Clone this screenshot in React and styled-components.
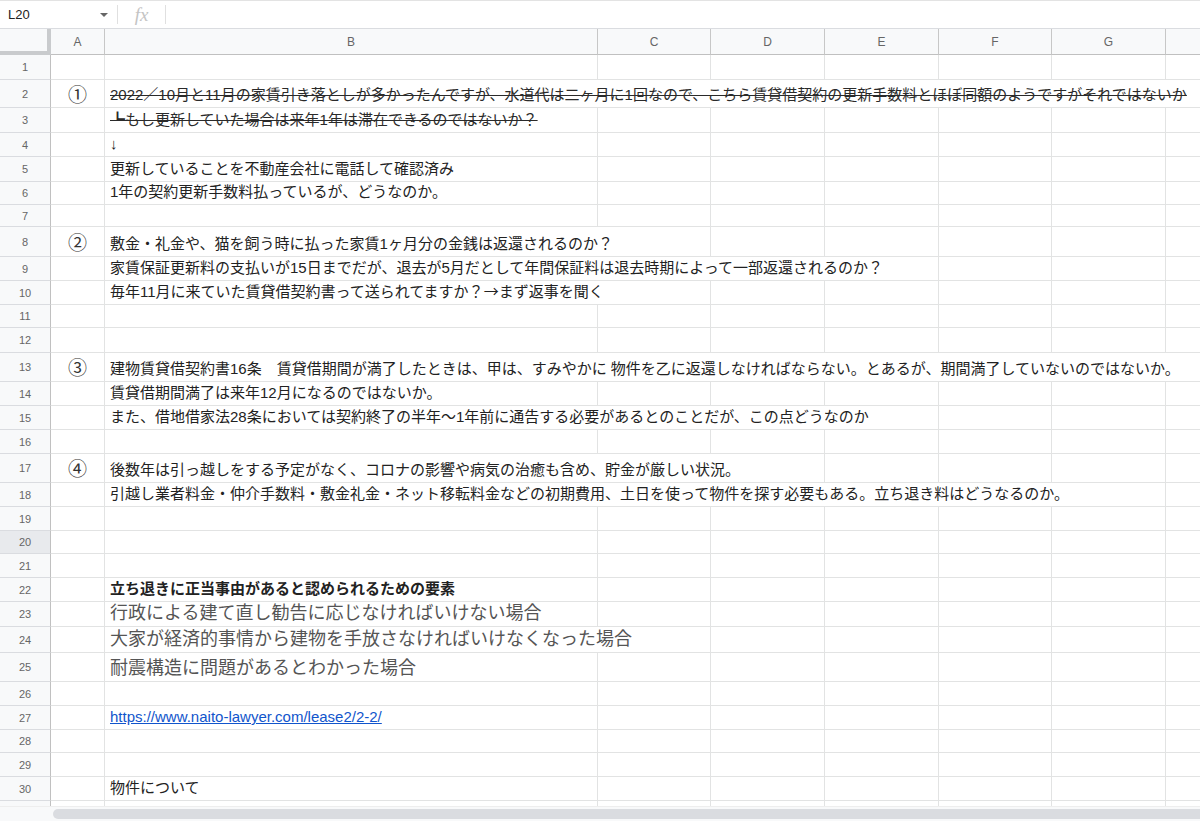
import React from "react";
import styled, { createGlobalStyle } from "styled-components";

const GlobalStyle = createGlobalStyle`
  html, body {
    margin: 0;
    padding: 0;
    background: #fff;
    font-family: "Liberation Sans", "Noto Sans CJK JP", sans-serif;
  }
  * { box-sizing: border-box; }
`;

const COLS = [54, 493, 113, 114, 114, 113, 114, 114];
const LETTERS = ["A", "B", "C", "D", "E", "F", "G", "H"];
const HEIGHTS = [25, 28, 25, 24, 25, 23, 22, 30, 24, 24, 23, 25, 29, 24, 24, 24, 29, 24, 24, 23, 24, 24, 25, 26, 29, 24, 24, 23, 24, 24, 24];

const Jp = styled.span`
  font-family: "Noto Sans CJK JP", sans-serif;
`;

const ROWS = {
  2: { mark: "①", span: 7, kind: "strike", text: "2022／10月と11月の家賃引き落としが多かったんですが、水道代は二ヶ月に1回なので、こちら賃貸借契約の更新手数料とほぼ同額のようですがそれではないか" },
  3: { span: 1, kind: "strike", text: "┗もし更新していた場合は来年1年は滞在できるのではないか？" },
  4: { span: 1, text: "↓" },
  5: { span: 1, text: "更新していることを不動産会社に電話して確認済み" },
  6: { span: 1, text: "1年の契約更新手数料払っているが、どうなのか。" },
  8: { mark: "②", span: 2, text: "敷金・礼金や、猫を飼う時に払った家賃1ヶ月分の金銭は返還されるのか？" },
  9: { span: 4, text: "家賃保証更新料の支払いが15日までだが、退去が5月だとして年間保証料は退去時期によって一部返還されるのか？" },
  10: { span: 2, text: <>毎年11月に来ていた賃貸借契約書って送られてますか？<Jp>→</Jp>まず返事を聞く</> },
  13: { mark: "③", span: 7, text: "建物賃貸借契約書16条　賃貸借期間が満了したときは、甲は、すみやかに 物件を乙に返還しなければならない。とあるが、期間満了していないのではないか。" },
  14: { span: 1, text: "賃貸借期間満了は来年12月になるのではないか。" },
  15: { span: 4, text: "また、借地借家法28条においては契約終了の半年～1年前に通告する必要があるとのことだが、この点どうなのか" },
  17: { mark: "④", span: 3, text: "後数年は引っ越しをする予定がなく、コロナの影響や病気の治癒も含め、貯金が厳しい状況。" },
  18: { span: 6, text: "引越し業者料金・仲介手数料・敷金礼金・ネット移転料金などの初期費用、土日を使って物件を探す必要もある。立ち退き料はどうなるのか。" },
  22: { span: 1, kind: "bold", text: "立ち退きに正当事由があると認められるための要素" },
  23: { span: 1, kind: "large", text: "行政による建て直し勧告に応じなければいけない場合" },
  24: { span: 2, kind: "large", text: "大家が経済的事情から建物を手放さなければいけなくなった場合" },
  25: { span: 1, kind: "large", text: "耐震構造に問題があるとわかった場合" },
  27: { span: 1, kind: "link", text: "https://www.naito-lawyer.com/lease2/2-2/" },
  30: { span: 1, text: "物件について" },
};

const Page = styled.div`
  width: 1200px;
  height: 821px;
  display: flex;
  flex-direction: column;
  overflow: hidden;
`;

const FormulaBar = styled.div`
  height: 29px;
  flex: none;
  display: flex;
  align-items: center;
  border-top: 1px solid #e3e3e3;
  border-bottom: 1px solid #dadce0;
  background: #fff;
`;

const NameBox = styled.div`
  width: 117px;
  height: 100%;
  display: flex;
  align-items: center;
  justify-content: space-between;
  padding: 0 9px 0 8px;
  font-size: 13px;
  color: #222;
`;

const Caret = styled.span`
  width: 0;
  height: 0;
  border-left: 4px solid transparent;
  border-right: 4px solid transparent;
  border-top: 4px solid #666;
`;

const Divider = styled.div`
  width: 1px;
  height: 19px;
  background: #e0e0e0;
`;

const FxLabel = styled.div`
  width: 47px;
  text-align: center;
  font-family: "Liberation Serif", serif;
  font-style: italic;
  font-size: 19px;
  color: #c4c4c4;
  line-height: 1;
`;

const Sheet = styled.div`
  flex: 1;
  overflow: hidden;
`;

const Grid = styled.div`
  display: grid;
  grid-template-columns: 51px ${COLS.map((c) => c + "px").join(" ")};
  grid-template-rows: 26px ${HEIGHTS.map((h) => h + "px").join(" ")};
  width: 1280px;
`;

const Corner = styled.div`
  background: #f8f9fa;
  border-right: 4px solid #c9cbcd;
  border-bottom: 4px solid #c9cbcd;
`;

const ColHeader = styled.div`
  background: #f8f9fa;
  border-right: 1px solid #c7c7c7;
  border-bottom: 1px solid #c0c0c0;
  display: flex;
  align-items: center;
  justify-content: center;
  font-size: 12px;
  color: #666;
`;

const RowHeader = styled.div`
  background: ${(p) => (p.$active ? "#e8eaed" : "#f8f9fa")};
  border-right: 1px solid #c0c0c0;
  border-bottom: 1px solid #dadce0;
  display: flex;
  align-items: center;
  justify-content: center;
  font-size: 11px;
  color: #666;
`;

const Cell = styled.div`
  grid-column: span ${(p) => p.$span || 1};
  border-right: 1px solid #e2e3e3;
  border-bottom: 1px solid #e2e3e3;
  display: flex;
  align-items: flex-end;
  padding: 0 4px 2px 5px;
  white-space: nowrap;
  overflow: hidden;
  font-size: 15px;
  line-height: 20px;
  color: #222;
`;

const MarkCell = styled(Cell)`
  justify-content: center;
  align-items: center;
  padding: 0;
  overflow: visible;
  font-family: "Noto Sans CJK JP", sans-serif;
  font-size: 19px;
  line-height: 22px;
  color: #333;
`;

const Text = styled.span`
  ${(p) => p.$kind === "strike" && "text-decoration: line-through; color: #2a2a2a;"}
  ${(p) => p.$kind === "bold" && "font-weight: 700;"}
  ${(p) => p.$kind === "large" && "font-size: 18px; line-height: 22px; color: #555;"}
  ${(p) => p.$kind === "link" && "color: #1155cc; text-decoration: underline;"}
`;

const ScrollTrack = styled.div`
  height: 15px;
  flex: none;
  display: flex;
  background: #f8f9fa;
  border-top: 1px solid #eeeeee;
  padding: 2px 0 2px 53px;
`;

const ScrollThumb = styled.div`
  flex: 1;
  background: #dadce0;
  border-radius: 5px 0 0 5px;
`;

function SheetRow({ n }) {
  const row = ROWS[n];
  const span = row ? row.span : 1;
  const rest = COLS.length - 1 - span;
  return (
    <>
      <RowHeader $active={n === 20}>{n}</RowHeader>
      {row && row.mark ? <MarkCell>{row.mark}</MarkCell> : <Cell />}
      <Cell $span={span}>
        {row && <Text $kind={row.kind}>{row.text}</Text>}
      </Cell>
      {Array.from({ length: rest }, (_, i) => (
        <Cell key={i} />
      ))}
    </>
  );
}

export default function App() {
  return (
    <Page>
      <GlobalStyle />
      <FormulaBar>
        <NameBox>
          L20
          <Caret />
        </NameBox>
        <Divider />
        <FxLabel>fx</FxLabel>
        <Divider />
      </FormulaBar>
      <Sheet>
        <Grid>
          <Corner />
          {LETTERS.map((l) => (
            <ColHeader key={l}>{l}</ColHeader>
          ))}
          {HEIGHTS.map((_, i) => (
            <SheetRow key={i} n={i + 1} />
          ))}
        </Grid>
      </Sheet>
      <ScrollTrack>
        <ScrollThumb />
      </ScrollTrack>
    </Page>
  );
}
